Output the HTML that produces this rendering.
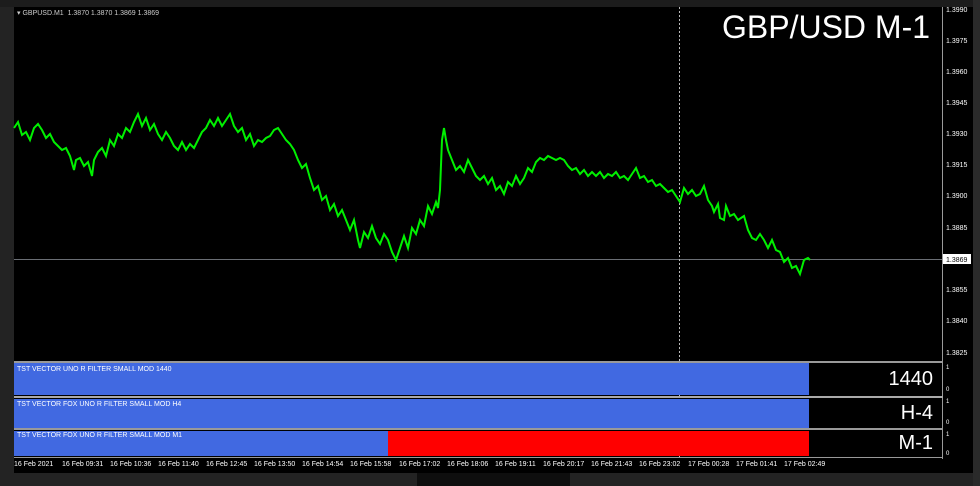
<!DOCTYPE html>
<html><head><meta charset="utf-8"><style>
body{margin:0;width:980px;height:486px;background:#232323;overflow:hidden;position:relative;font-family:"Liberation Sans",sans-serif}
.a{position:absolute}
.t{color:#fff;font-size:7px;white-space:nowrap}
.r{position:absolute;right:47px;color:#fff;font-size:20px}
</style></head><body>
<div class="a" style="left:0;top:0;width:980px;height:7px;background:#1c1c1c"></div>
<div class="a" style="left:973px;top:0;width:7px;height:486px;background:#2a2a2a"></div>
<div class="a" style="left:417px;top:473px;width:153px;height:13px;background:#0e0e0e"></div>
<div class="a" style="left:14px;top:7px;width:959px;height:466px;background:#000"></div>
<svg class="a" style="left:0;top:0" width="980" height="486">
<line x1="942.5" y1="7" x2="942.5" y2="459" stroke="#9a9a9a"/>
<line x1="14" y1="259.5" x2="942" y2="259.5" stroke="#6a6e74"/>
<line x1="679.5" y1="7" x2="679.5" y2="459" stroke="#bbb" stroke-dasharray="2,2"/>
<polyline fill="none" stroke="#00f000" stroke-width="2" points="14,128 18,122 22,135 26,132 30,140 34,128 38,124 42,130 46,138 50,134 54,142 58,146 62,150 66,148 70,156 74,170 76,160 80,158 84,166 88,162 92,176 94,160 98,152 102,148 106,156 110,140 114,146 118,134 122,138 126,128 130,132 134,122 138,114 142,126 146,118 150,130 154,124 158,134 162,140 166,132 170,138 174,146 178,150 182,142 186,150 190,144 194,148 198,140 202,132 206,128 210,120 214,126 218,118 222,126 226,120 230,114 234,126 238,132 242,128 246,140 250,134 254,146 258,140 262,142 266,138 270,136 274,130 278,128 282,134 286,140 290,144 294,150 298,160 302,168 306,164 310,178 314,190 318,186 322,200 326,196 330,210 334,204 338,216 342,210 346,220 350,230 354,220 358,240 360,248 364,232 368,238 372,226 376,238 380,244 384,234 388,240 392,252 396,260 400,248 404,236 408,248 412,228 416,234 420,220 424,226 428,206 432,214 436,202 438,208 440,190 442,140 444,128 446,140 448,150 452,160 456,170 460,166 464,172 468,160 472,168 476,176 480,180 484,176 488,184 492,178 496,190 500,186 504,194 508,182 512,186 516,176 520,184 524,178 528,168 532,172 536,162 540,158 544,160 548,156 552,158 556,160 560,158 564,160 568,166 572,170 576,168 580,174 584,170 588,176 592,172 596,176 600,172 604,178 608,174 612,176 616,172 620,178 624,176 628,180 632,174 636,168 640,178 644,176 648,182 652,180 656,186 660,184 664,188 668,192 672,190 676,196 680,202 684,188 688,194 692,190 696,196 700,194 704,186 708,200 712,206 714,212 718,204 720,218 724,220 726,206 730,216 734,214 738,220 744,216 748,230 752,238 756,240 760,234 764,240 768,248 772,240 776,250 780,252 784,262 788,258 792,268 796,266 800,274 804,260 808,258 810,260"/>
<g fill="#fff" font-size="7" font-family="Liberation Sans">
<text x="946" y="12">1.3990</text><text x="946" y="43">1.3975</text><text x="946" y="74">1.3960</text><text x="946" y="105">1.3945</text><text x="946" y="136">1.3930</text><text x="946" y="167">1.3915</text><text x="946" y="198">1.3900</text><text x="946" y="230">1.3885</text><text x="946" y="292">1.3855</text><text x="946" y="323">1.3840</text><text x="946" y="355">1.3825</text>
</g>
<rect x="943" y="254" width="28" height="10" fill="#fff"/>
<text x="946" y="262" font-size="7" fill="#000">1.3869</text>
</svg>
<div class="a t" style="left:17px;top:9px;color:#ccc">▾ GBPUSD.M1&nbsp; 1.3870 1.3870 1.3869 1.3869</div>
<div class="a" style="left:722px;top:9px;color:#fff;font-size:32px">GBP/USD M-1</div>
<div class="a" style="left:14px;top:361px;width:929px;height:2px;background:#999"></div>
<div class="a" style="left:14px;top:363px;width:795px;height:32px;background:#4169e1"></div>
<div class="a" style="left:14px;top:396px;width:929px;height:2px;background:#aaa"></div>
<div class="a" style="left:14px;top:399px;width:795px;height:29px;background:#4169e1"></div>
<div class="a" style="left:14px;top:428px;width:929px;height:2px;background:#999"></div>
<div class="a" style="left:14px;top:431px;width:374px;height:25px;background:#4169e1"></div>
<div class="a" style="left:388px;top:431px;width:421px;height:25px;background:#ff0000"></div>
<div class="a" style="left:14px;top:457px;width:929px;height:1px;background:#999"></div>
<div class="a t" style="left:17px;top:366px">TST VECTOR UNO R FILTER SMALL MOD 1440</div>
<div class="a t" style="left:17px;top:401px">TST VECTOR FOX UNO R FILTER SMALL MOD H4</div>
<div class="a t" style="left:17px;top:432px">TST VECTOR FOX UNO R FILTER SMALL MOD M1</div>
<div class="r" style="top:368px">1440</div>
<div class="r" style="top:402px">H-4</div>
<div class="r" style="top:432px">M-1</div>
<div class="a t" style="left:946px;top:365px;font-size:6px">1</div><div class="a t" style="left:946px;top:387px;font-size:6px">0</div>
<div class="a t" style="left:946px;top:399px;font-size:6px">1</div><div class="a t" style="left:946px;top:420px;font-size:6px">0</div>
<div class="a t" style="left:946px;top:432px;font-size:6px">1</div><div class="a t" style="left:946px;top:451px;font-size:6px">0</div>
<div class="a t" style="left:14px;top:461px">16 Feb 2021</div>
<div class="a t" style="left:62px;top:461px">16 Feb 09:31</div>
<div class="a t" style="left:110px;top:461px">16 Feb 10:36</div>
<div class="a t" style="left:158px;top:461px">16 Feb 11:40</div>
<div class="a t" style="left:206px;top:461px">16 Feb 12:45</div>
<div class="a t" style="left:254px;top:461px">16 Feb 13:50</div>
<div class="a t" style="left:302px;top:461px">16 Feb 14:54</div>
<div class="a t" style="left:350px;top:461px">16 Feb 15:58</div>
<div class="a t" style="left:399px;top:461px">16 Feb 17:02</div>
<div class="a t" style="left:447px;top:461px">16 Feb 18:06</div>
<div class="a t" style="left:495px;top:461px">16 Feb 19:11</div>
<div class="a t" style="left:543px;top:461px">16 Feb 20:17</div>
<div class="a t" style="left:591px;top:461px">16 Feb 21:43</div>
<div class="a t" style="left:639px;top:461px">16 Feb 23:02</div>
<div class="a t" style="left:688px;top:461px">17 Feb 00:28</div>
<div class="a t" style="left:736px;top:461px">17 Feb 01:41</div>
<div class="a t" style="left:784px;top:461px">17 Feb 02:49</div>
</body></html>
